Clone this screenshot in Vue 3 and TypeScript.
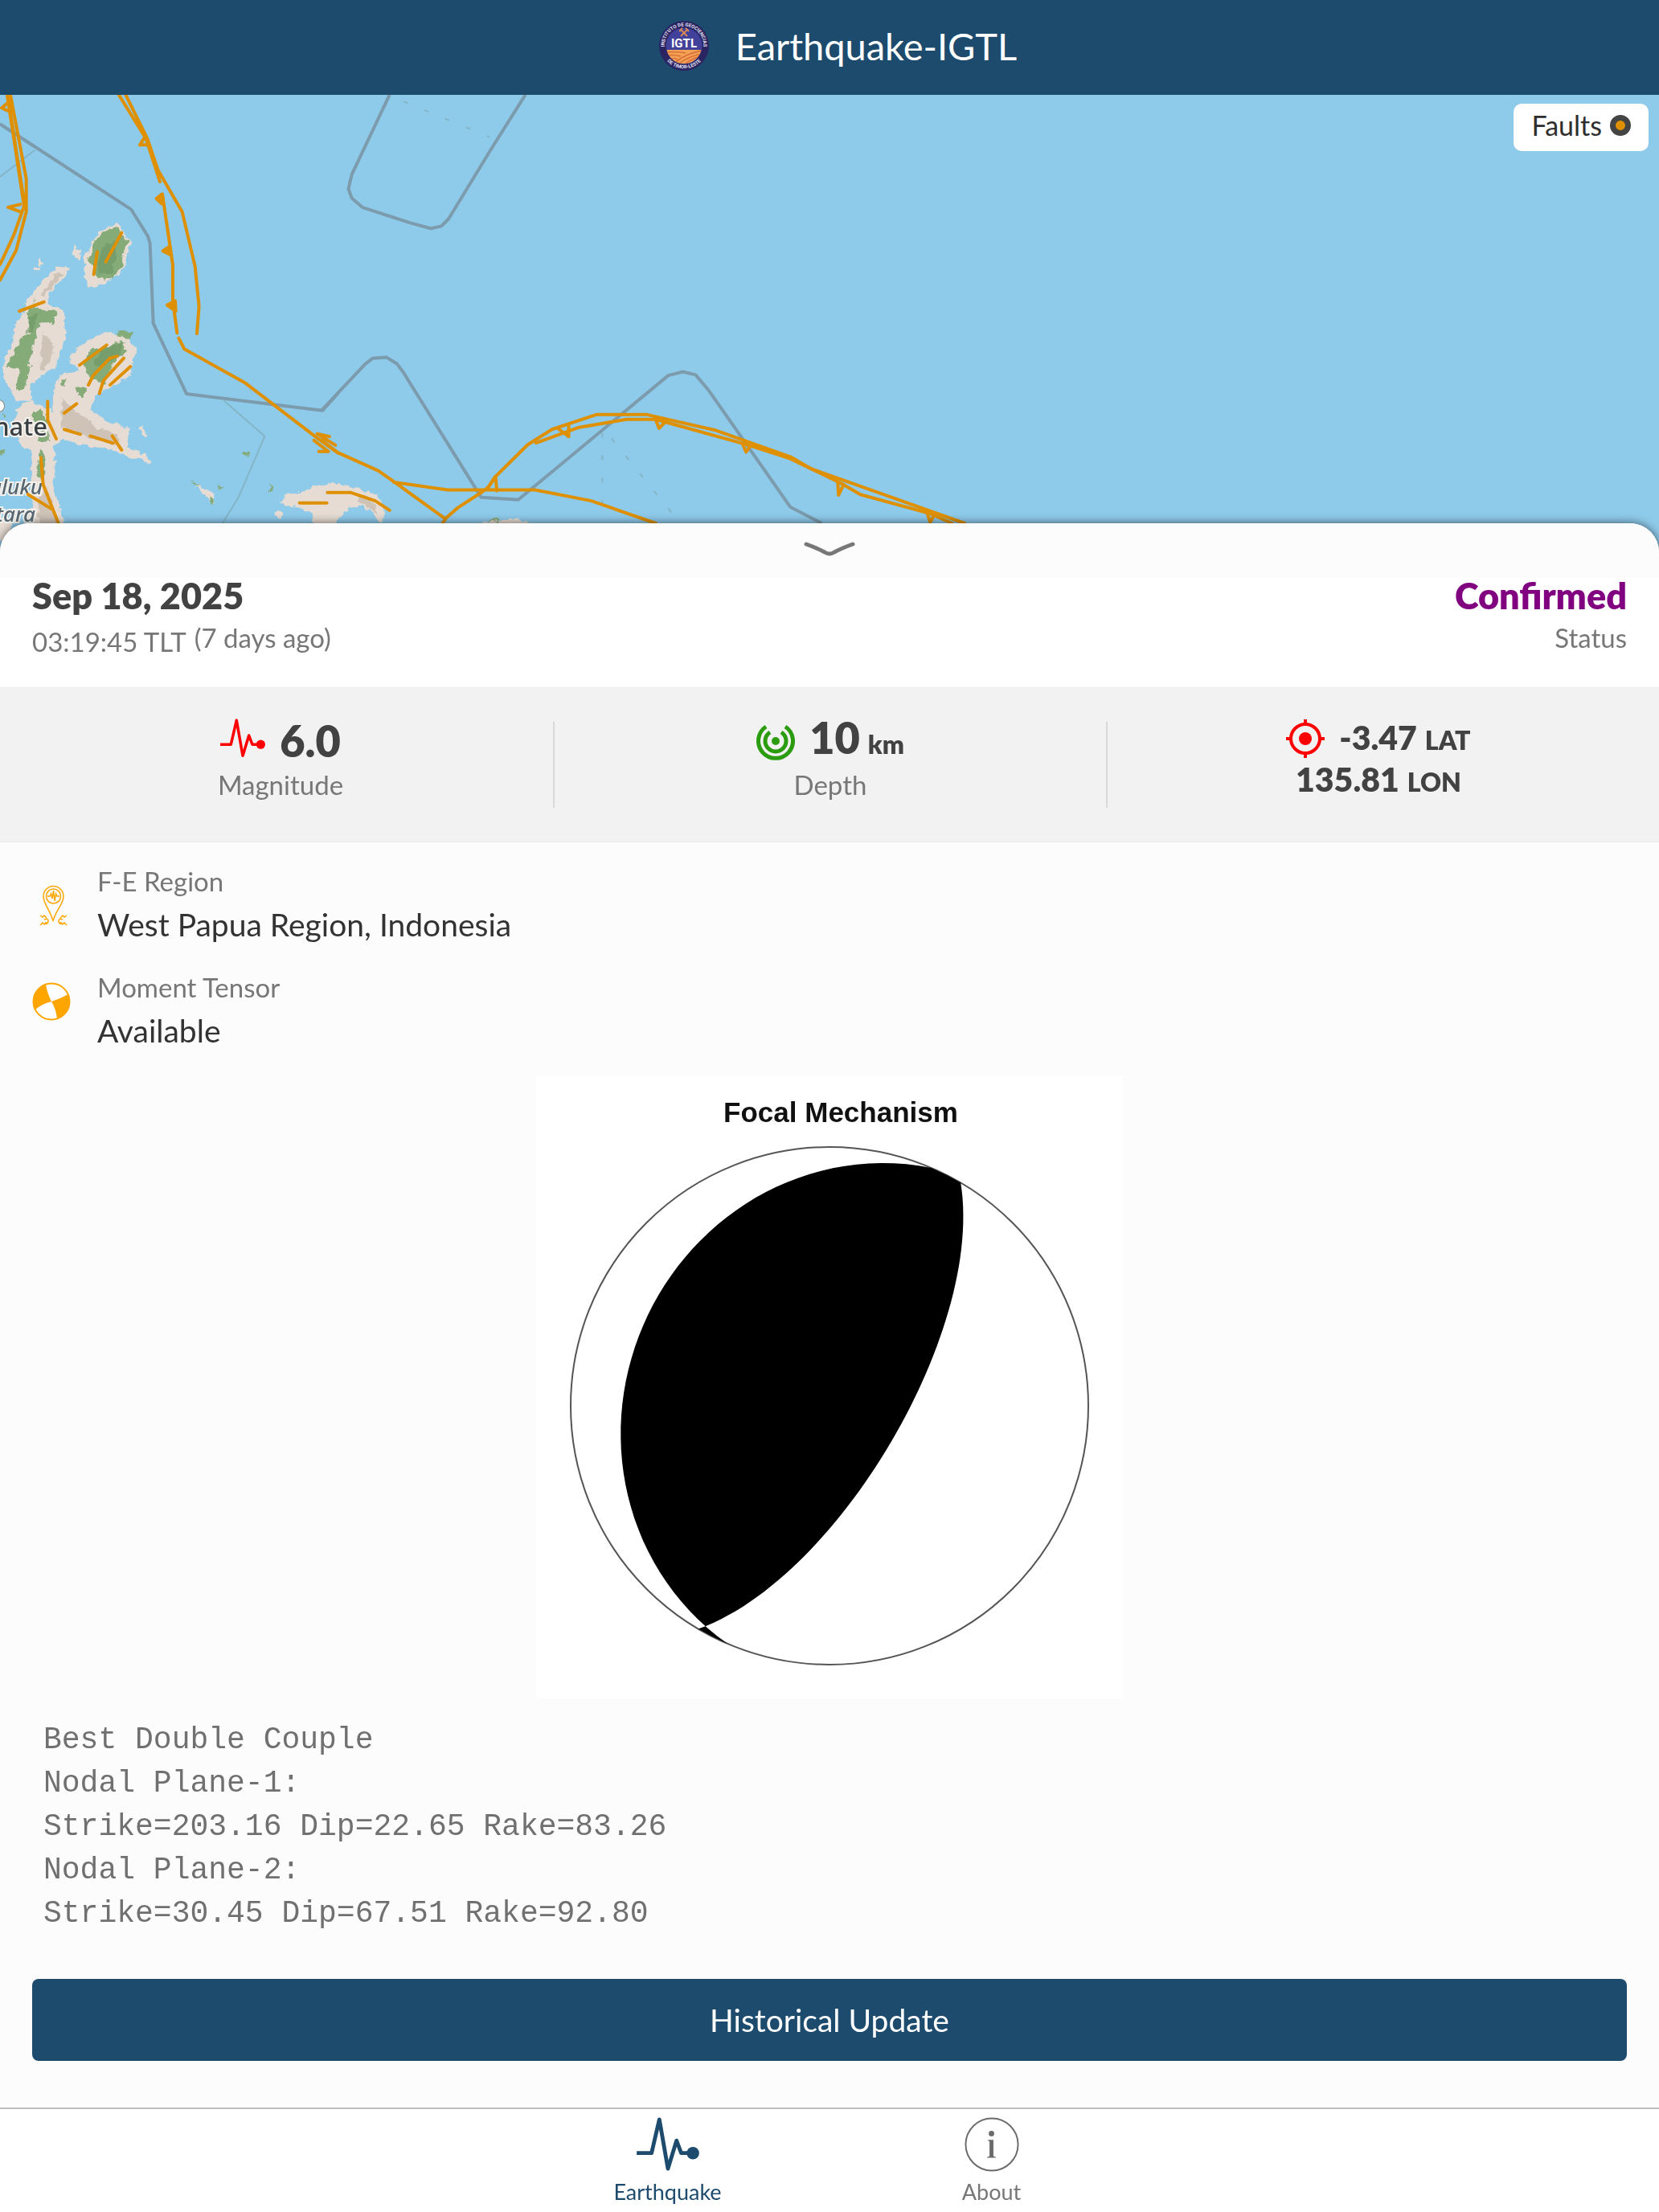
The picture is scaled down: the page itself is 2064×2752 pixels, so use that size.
<script setup lang="ts">
import { ref } from 'vue'

interface Plane {
  strike: number
  dip: number
  rake: number
}

interface Fact {
  icon: 'pin' | 'beachball'
  label: string
  value: string
}

const planes: Plane[] = [
  { strike: 203.16, dip: 22.65, rake: 83.26 },
  { strike: 30.45, dip: 67.51, rake: 92.8 },
]

const facts: Fact[] = [
  { icon: 'pin', label: 'F-E Region', value: 'West Papua Region, Indonesia' },
  { icon: 'beachball', label: 'Moment Tensor', value: 'Available' },
]

const showFaults = ref(true)

const solution = [
  'Best Double Couple',
  ...planes.flatMap((p, i) => [
    `Nodal Plane-${i + 1}:`,
    `Strike=${p.strike.toFixed(2)} Dip=${p.dip.toFixed(2)} Rake=${p.rake.toFixed(2)}`,
  ]),
].join('\n')

const RADIUS = 322
const rad = (deg: number) => (deg * Math.PI) / 180

// Lower-hemisphere equal-area trace of a plane, from its strike end to the opposite end.
function trace(plane: Plane): string[] {
  const s = rad(plane.strike)
  const d = rad(plane.dip)
  const points: string[] = []
  for (let t = 0; t <= 180; t += 3) {
    const a = rad(t)
    const north = Math.cos(a) * Math.cos(s) - Math.sin(a) * Math.sin(s) * Math.cos(d)
    const east = Math.cos(a) * Math.sin(s) + Math.sin(a) * Math.cos(s) * Math.cos(d)
    const down = Math.sin(a) * Math.sin(d)
    const h = Math.hypot(north, east)
    const r = RADIUS * Math.SQRT2 * Math.sin(Math.acos(Math.min(1, down)) / 2)
    points.push(`${((r * east) / h).toFixed(1)} ${((-r * north) / h).toFixed(1)}`)
  }
  return points
}

const first = trace(planes[0])
const second = trace(planes[1])
const arc = `A${RADIUS} ${RADIUS} 0 0 1 `
const compression = `M${first.join('L')}${arc}${second[0]}L${second.join('L')}A${RADIUS} ${RADIUS} 0 0 0 ${first[0]}Z`
</script>

<template>
  <div class="app">
    <header class="topbar">
      <svg class="logo" viewBox="-32 -32 64 64" aria-hidden="true">
        <defs>
          <path id="ring-top" d="M-23.500 6A24.300 24.300 0 1 1 23.500 6" />
          <path id="ring-bottom" d="M-25 13.500A28.500 28.500 0 0 0 25 13.500" />
          <clipPath id="field"><path d="M-21.500 5H21.500A22 22 0 0 1 -21.500 5Z" /></clipPath>
        </defs>
        <circle r="31" fill="#2a2462" />
        <circle r="22.500" fill="#41409a" />
        <g clip-path="url(#field)">
          <rect x="-23" y="4" width="46" height="20" fill="#f2a252" />
          <path d="M-22 8Q-10 7 2 9M-22 12Q-12 11 -4 13M-18 16Q-12 15 -8 17M-10 20Q2 10 22 6M-6 22Q6 13 22 10M2 22Q10 16 20 13" fill="none" stroke="#d8693a" stroke-width="1.400" />
        </g>
        <path d="M-4 -12L4 -20M4 -12L-4 -20M-6 -18L-2 -22M2 -22L6 -18" stroke="#d98a55" stroke-width="1.800" fill="none" />
        <text class="logo-name" x="0" y="2" text-anchor="middle">IGTL</text>
        <text class="logo-ring"><textPath href="#ring-top" startOffset="50%" text-anchor="middle">INSTITUTO DE GEOCIENCIAS</textPath></text>
        <text class="logo-ring"><textPath href="#ring-bottom" startOffset="50%" text-anchor="middle">DE TIMOR-LESTE</textPath></text>
      </svg>
      <h1>Earthquake-IGTL</h1>
    </header>

    <section class="map" aria-label="Map">
      <svg class="map-canvas" viewBox="0 0 2064 593" preserveAspectRatio="xMidYMin slice">
        <defs>
          <filter id="coast" x="-10%" y="-10%" width="120%" height="120%">
            <feTurbulence type="fractalNoise" baseFrequency="0.120" numOctaves="3" seed="4" result="n" />
            <feDisplacementMap in="SourceGraphic" in2="n" scale="9" xChannelSelector="R" yChannelSelector="G" />
          </filter>
        </defs>

        <!-- islands, western part -->
        <g filter="url(#coast)">
          <g transform="translate(0 -8) scale(.3333 .3571)">
            <g fill="#e6dcd3" stroke="#e6dcd3" stroke-width="10" stroke-linejoin="round">
              <path d="M437 472L450 492L484 540L466 590L450 640L400 670L335 690L322 640L318 590L345 540L380 500Z" />
              <path d="M282 555L298 570L290 595L276 575ZM145 595L162 606L150 615ZM130 625L145 630L132 636Z" />
              <path d="M215 625L255 630L210 680L170 730L180 760L215 765L235 790L238 870L200 970L130 1010L100 1050L110 1080L60 1080L45 1040L14 1010L20 940L50 890L60 830L90 790L105 740L150 690Z" />
              <path d="M262 945L300 900L400 848L470 870L506 905L480 1000L420 1035L360 1060L330 1120L400 1165L480 1190L470 1255L540 1280L555 1300L470 1275L400 1250L300 1235L230 1215L195 1250L200 1330L190 1380L215 1450L240 1520L100 1520L130 1440L120 1380L125 1260L80 1240L62 1180L65 1120L110 1090L200 1130L205 1050L230 1000L310 990Z" />
              <path d="M0 1515H40V1570H0ZM525 1182L545 1210L535 1205Z" />
              <path d="M1050 1440L1075 1412L1130 1410L1170 1395L1240 1380L1330 1400L1400 1415L1430 1460L1420 1510L1390 1470L1340 1450L1280 1470L1250 1520L1180 1520L1160 1470L1100 1455ZM735 1385L790 1410L800 1440L775 1420ZM1030 1475L1050 1485L1040 1495Z" />
            </g>
            <g fill="#c6b9ae" opacity=".7">
              <path d="M200 650L240 640L190 705L150 725ZM160 850L200 900L180 960L150 990ZM230 1080L280 1120L360 1180L440 1210L440 1240L330 1215L230 1180Z" />
              <path d="M170 1390L195 1450L215 1520L150 1520L140 1440ZM1330 1410L1390 1430L1410 1480L1350 1450Z" />
            </g>
            <g fill="#85ab78">
              <path d="M400 490L440 485L482 535L460 560L455 620L420 665L370 660L330 600L345 540Z" />
              <path d="M140 722L128 745L125 765L208 775L205 820L150 815L130 880L100 970L115 965L90 1050L60 1050L70 980L25 970L50 930L85 860L110 860L105 780Z" />
              <path d="M430 850L498 845L480 868L450 865ZM345 900L370 905L460 880L470 915L420 960L390 1030L340 1010L310 960ZM280 1040L325 1040L315 1080L290 1065ZM225 1020L250 1010L235 1035Z" />
              <path d="M120 1130L155 1115L175 1150L180 1225L140 1230L150 1190L120 1150ZM150 1255L168 1280L160 1370L140 1350Z" />
              <path d="M910 1268L930 1272L925 1284ZM700 1360L745 1385L735 1385ZM780 1415L808 1440L790 1445ZM812 1378L830 1395L815 1395ZM1005 1375L1018 1400L1005 1405ZM0 1260L18 1265L10 1278L0 1280ZM10 1125L22 1140L10 1150Z" />
            </g>
            <g fill="#6c9464" opacity=".6">
              <path d="M400 540L440 530L420 640L370 650L360 600ZM400 900L470 885L440 930L370 980L350 950ZM110 790L140 790L120 850L100 860Z" />
            </g>
          </g>
          <g transform="translate(400 -8) scale(.523 .3571)">
            <path d="M370 1520L400 1505L470 1500L510 1525Z" fill="#e6dcd3" />
            <path d="M395 1510L420 1495L425 1506Z" fill="#85ab78" />
          </g>
        </g>

        <!-- maritime boundaries -->
        <g class="boundary" transform="translate(0 -8) scale(.3333 .3571)">
          <path d="M0 124L490 422L552 515L560 540L572 818L696 1064L1204 1122L1262 1062" />
          <path class="faint" d="M0 308L130 215M836 1088L988 1212L890 1425L830 1515" />
        </g>
        <g class="boundary" transform="translate(400 -8) scale(.523 .3571)">
          <path d="M162 22L72 300L64 350L72 382L98 415L210 468L260 488L285 480L302 455L400 220L485 22" />
          <path d="M0 1122L104 960L122 940L155 937L180 960L195 990L380 1425L468 1433L825 1000L860 987L890 998L920 1050L1115 1458L1190 1515" />
          <path class="faint dashed" d="M195 45L400 170M668 1200V1510M690 1220L845 1500" />
        </g>

        <g class="place">
          <circle cx="-2" cy="387" r="7" />
          <text x="59" y="424" font-size="31" text-anchor="end">Ternate</text>
          <text class="region" x="53" y="497" font-size="26" text-anchor="end">Maluku</text>
          <text class="region" x="44" y="531" font-size="26" text-anchor="end">Utara</text>
        </g>

        <!-- fault traces -->
        <g v-if="showFaults">
          <g class="fault" transform="translate(0 -8) scale(.3333 .3571)">
            <path d="M26 18L90 410L52 510L0 614M38 18L98 315V430L60 565L0 668M30 30L90 395" />
            <path d="M30 50L6 68L38 82M76 404L30 414L78 430" />
            <path d="M442 20L545 175L597 325M468 20L550 175L590 285L680 430L728 620L743 760L735 854M540 170L522 197H552" />
            <path d="M606 368L645 615V740L661 852M667 870L688 908L912 1024L1180 1215L1262 1270" />
            <path d="M350 648L363 570M395 604L454 503M72 776L164 744M297 964L398 894M330 1033L348 1000L410 940L438 933M371 1063L386 1018L462 940M411 1033L487 969" />
            <path d="M178 1090V1155L210 1221M240 1131L286 1099M240 1188L300 1205M337 1211L422 1236M419 1211L454 1260M153 1286L161 1380L218 1515M104 1414L192 1465" />
            <path d="M1230 1213L1184 1203L1252 1243M1172 1226L1226 1265H1190M1118 1444H1220" />
            <path class="tooth" d="M604 368L584 384L604 402ZM634 550L608 566L638 580ZM654 740L624 755L656 776Z" />
          </g>
          <g class="fault" transform="translate(400 -8) scale(.523 .3571)">
            <path d="M0 1225L38 1268L135 1332L172 1370L295 1500L288 1515M172 1372L300 1399H508L642 1437L795 1515M295 1498L325 1460L380 1408L398 1388L412 1355L490 1242L548 1188L655 1136H772L935 1190L1118 1285L1165 1325L1530 1515" />
            <path d="M510 1235L610 1182L725 1153H795L1010 1240L1115 1290L1235 1375L1282 1415L1445 1480L1500 1515" />
            <path d="M562 1184L588 1213V1176M795 1155L803 1184L818 1162M1002 1240L1010 1267L1020 1246M1228 1372L1230 1417L1242 1380M1442 1485L1448 1512L1456 1490M394 1394L414 1352L417 1402" />
            <path d="M14 1408H70L128 1437L162 1470" />
          </g>
        </g>
      </svg>
      <button class="faults" type="button" :aria-pressed="showFaults" @click="showFaults = !showFaults">
        Faults
        <span class="dot"></span>
      </button>
    </section>

    <main class="sheet">
      <button class="handle" type="button" aria-label="Collapse">
        <svg width="66" height="22" viewBox="0 0 66 22" aria-hidden="true">
          <path d="M4 4Q18 9 27 14Q33 18 39 14Q48 9 62 4" fill="none" stroke="#777" stroke-width="5" stroke-linecap="round" />
        </svg>
      </button>

      <section class="summary">
        <div>
          <h2>Sep 18, 2025</h2>
          <p class="when">
            <time>03:19:45 TLT</time>
            <span>(7 days ago)</span>
          </p>
        </div>
        <div class="status">
          <strong>Confirmed</strong>
          <p>Status</p>
        </div>
      </section>

      <section class="metrics">
        <div class="metric">
          <p class="reading">
            <svg class="pulse" width="56" height="56" viewBox="0 0 80 80" aria-hidden="true">
              <path d="M0 46H19L29 3L40 66L51 30L57 46H72" />
              <circle cx="72" cy="46" r="8" />
            </svg>
            <b>6.0</b>
          </p>
          <p class="caption">Magnitude</p>
        </div>
        <div class="metric">
          <p class="reading">
            <svg width="48" height="48" viewBox="-24 -24 48 48" fill="none" stroke="#2b9c0f" stroke-width="5" aria-hidden="true">
              <path d="M-12 -18A21.500 21.500 0 1 0 12 -18" />
              <path d="M-7 -11A13 13 0 1 0 7 -11" />
              <circle r="5" fill="#2b9c0f" stroke="none" />
            </svg>
            <span class="amount"><b>10</b> <small>km</small></span>
          </p>
          <p class="caption">Depth</p>
        </div>
        <div class="metric">
          <p class="coordinate">
            <svg width="48" height="48" viewBox="-24 -24 48 48" fill="none" stroke="#f00" stroke-width="4" aria-hidden="true">
              <circle r="18" />
              <path d="M0 -24V-17M0 24V17M-24 0H-17M24 0H17" />
              <circle r="8" fill="#f00" stroke="none" />
            </svg>
            <span class="amount"><b>-3.47</b> <small>LAT</small></span>
          </p>
          <p class="coordinate"><span class="amount"><b>135.81</b> <small>LON</small></span></p>
        </div>
      </section>

      <section class="details">
        <dl>
          <div v-for="fact in facts" :key="fact.label" class="fact">
            <svg v-if="fact.icon === 'pin'" width="50" height="76" viewBox="0 0 50 76" fill="none" stroke="#ffa500" stroke-width="1.500" aria-hidden="true">
              <path d="M26 70C23 57 14 49 14 39A12.500 12.500 0 0 1 39 39C39 49 29 57 26 70Z" />
              <circle cx="26.500" cy="39" r="9" />
              <path d="M19 39H22L23.500 36L25 42L26.500 32L28 45L29.500 36L31 39H34" />
              <path d="M10 63L13 65L15 63L18 66M10 75L13 72L15 74L18 71M43 63L40 65L38 63L35 66M43 75L40 72L38 74L35 71M15 68Q20 66 20 70Q20 74 15 73M38 68Q33 66 33 70Q33 74 38 73" />
            </svg>
            <svg v-else width="50" height="76" viewBox="0 0 50 76" aria-hidden="true">
              <circle cx="24" cy="38" r="22.500" fill="#fff" stroke="#ffa500" stroke-width="2" />
              <path d="M24 38Q18 26 17 16A23 23 0 0 0 4 48Q12 41 24 38ZM24 38Q36 34 45 29A23 23 0 0 1 31 60Q30 48 24 38Z" fill="#ffa500" />
            </svg>
            <div>
              <dt>{{ fact.label }}</dt>
              <dd>{{ fact.value }}</dd>
            </div>
          </div>
        </dl>

        <figure class="mechanism">
          <figcaption>Focal Mechanism</figcaption>
          <svg width="648" height="648" viewBox="-324 -324 648 648" role="img" aria-label="Beachball diagram">
            <circle :r="RADIUS" fill="#fff" stroke="#555" stroke-width="2" />
            <path :d="compression" fill="#000" />
          </svg>
        </figure>

        <pre>{{ solution }}</pre>

        <button class="history" type="button">Historical Update</button>
      </section>
    </main>

    <nav class="tabs">
      <a href="#earthquake" class="active" aria-current="page">
        <svg class="pulse" width="80" height="70" viewBox="0 0 80 70" aria-hidden="true">
          <path d="M0 46H19L29 3L40 66L51 30L57 46H72" />
          <circle cx="72" cy="46" r="8" />
        </svg>
        Earthquake
      </a>
      <a href="#about">
        <svg width="70" height="70" viewBox="0 0 70 70" aria-hidden="true">
          <circle cx="35" cy="35" r="33.500" fill="none" stroke="#6b6b6b" stroke-width="2" />
          <circle cx="34.500" cy="21" r="3.500" fill="#6b6b6b" />
          <path d="M30 29H37V49Q37 51 40 51V52H29V51Q32 51 32 49V32Q32 30 30 30Z" fill="#6b6b6b" />
        </svg>
        About
      </a>
    </nav>
  </div>
</template>

<style>
body {
  margin: 0;
  background: #fcfcfc;
}
</style>

<style scoped>
.app {
  display: flex;
  flex-direction: column;
  min-height: 100vh;
  font-family: Lato, "Liberation Sans", sans-serif;
  font-size: 33px;
  line-height: 40px;
  color: #333;
}

h1,
h2,
p,
dl,
dd,
pre,
figure {
  margin: 0;
  font-weight: 400;
}

button {
  border: 0;
  font: inherit;
  color: inherit;
  cursor: pointer;
}

.topbar {
  display: flex;
  align-items: center;
  justify-content: center;
  gap: 32px;
  height: 118px;
  padding: 0 0 4px 20px;
  box-sizing: border-box;
  background: #1c4b6e;
  color: #fff;
}

.logo {
  width: 64px;
  height: 64px;
}

.logo-name {
  font: 700 15px Roboto, sans-serif;
  fill: #fff;
}

.logo-ring {
  font: 700 6px Roboto, sans-serif;
  fill: #e4e2f2;
}

h1 {
  font-size: 47px;
  line-height: 56px;
}

.map {
  position: relative;
  height: 593px;
  background: #8ecaea;
}

.map-canvas {
  display: block;
  width: 100%;
  height: 100%;
}

.boundary path {
  fill: none;
  stroke: #7c9bac;
  stroke-width: 4;
  stroke-linejoin: round;
  vector-effect: non-scaling-stroke;
}

.boundary .faint {
  stroke: #84b5c6;
  stroke-width: 2;
}

.boundary .dashed {
  stroke-dasharray: 6 22;
}

.fault path {
  fill: none;
  stroke: #de9000;
  stroke-width: 4;
  stroke-linecap: round;
  stroke-linejoin: round;
  vector-effect: non-scaling-stroke;
}

.fault .tooth {
  fill: #de9000;
}

.place {
  font-family: "Noto Sans", sans-serif;
  font-weight: 500;
  fill: #383f42;
  stroke: #f4f1ed;
  stroke-width: 4;
  paint-order: stroke;
}

.place circle {
  fill: #fff;
  stroke: #8b8b80;
  stroke-width: 2;
}

.place .region {
  font-style: italic;
  fill: #566670;
}

.faults {
  position: absolute;
  top: 11px;
  right: 13px;
  display: flex;
  align-items: center;
  gap: 10px;
  height: 59px;
  padding: 0 22px 6px;
  border-radius: 10px;
  background: #fff;
  color: #2e2e2e;
  font-size: 34px;
}

.dot {
  width: 12px;
  height: 12px;
  border: 7px solid #444;
  border-radius: 50%;
  background: #de9000;
}

.sheet {
  position: relative;
  flex: 1;
  margin-top: -60px;
  overflow: hidden;
  border-radius: 36px 36px 0 0;
  background: #fcfcfc;
  box-shadow: 0 0 12px rgba(0, 0, 0, 0.6);
}

.handle {
  display: flex;
  justify-content: center;
  width: 100%;
  height: 68px;
  padding: 22px 0 0;
  background: #fcfcfc;
}

.summary {
  display: flex;
  justify-content: space-between;
  height: 136px;
  padding: 2px 40px 0;
  box-sizing: border-box;
  background: #fff;
  color: #777;
}

h2,
.status strong {
  display: block;
  margin-bottom: 12px;
  font-size: 45px;
  font-weight: 800;
  color: #424242;
}

.when {
  display: flex;
  gap: 10px;
}

.when time {
  line-height: 50px;
}

.status {
  text-align: right;
}

.status strong {
  color: #800080;
}

.metrics {
  display: grid;
  grid-template-columns: repeat(3, 1fr);
  padding: 42px 0;
  border-top: 1px solid #ececec;
  border-bottom: 1px solid #ececec;
  background: #f2f2f2;
}

.metric {
  display: flex;
  flex-direction: column;
  align-items: center;
  gap: 10px;
  height: 107px;
  color: #424242;
}

.metric + .metric {
  border-left: 2px solid #d9d9d9;
}

.metric:first-child {
  padding-left: 10px;
}

.metric:last-child {
  padding-right: 12px;
}

.reading {
  display: flex;
  align-items: center;
  gap: 18px;
  height: 48px;
  font-size: 54px;
  line-height: 48px;
}

.amount {
  display: flex;
  align-items: baseline;
  gap: 10px;
}

.metrics b,
.metrics small {
  font-weight: 800;
}

.metrics small {
  font-size: 32px;
}

.caption {
  color: #777;
}

.coordinate {
  display: flex;
  align-items: center;
  gap: 18px;
  height: 42px;
  font-size: 41px;
  line-height: 44px;
}

.pulse {
  fill: #1c4b6e;
}

.pulse path {
  fill: none;
  stroke: #1c4b6e;
  stroke-width: 5;
  stroke-linejoin: round;
}

.reading .pulse {
  fill: #f00;
}

.reading .pulse path {
  stroke: #f00;
}

.details {
  display: flex;
  flex-direction: column;
  padding: 28px 40px 56px;
}

dl {
  display: flex;
  flex-direction: column;
  gap: 36px;
}

.fact {
  display: flex;
  gap: 31px;
}

dt {
  color: #777;
}

dd {
  margin-top: 12px;
  font-size: 39px;
  line-height: 44px;
  color: #333;
}

.mechanism {
  display: flex;
  flex-direction: column;
  align-items: center;
  align-self: center;
  gap: 21px;
  width: 730px;
  height: 775px;
  margin-top: 34px;
  padding-top: 26px;
  box-sizing: border-box;
  background: #fff;
}

figcaption {
  padding-left: 28px;
  font: 700 35px/40px "Liberation Sans", sans-serif;
  color: #111;
}

pre {
  margin-top: 25px;
  padding-left: 14px;
  font: 38px/54px "Liberation Mono", monospace;
  color: #707070;
}

.history {
  height: 102px;
  margin-top: 54px;
  border-radius: 8px;
  background: #1c4b6e;
  color: #fff;
  font-size: 39px;
}

.tabs {
  position: relative;
  display: flex;
  justify-content: center;
  border-top: 2px solid #bdbdbd;
  background: #fff;
}

.tabs a {
  display: flex;
  flex-direction: column;
  align-items: center;
  width: 403px;
  height: 118px;
  padding-top: 10px;
  font-size: 27px;
  line-height: 50px;
  color: #777;
  text-decoration: none;
}

.tabs .active {
  color: #1c4b6e;
}
</style>
